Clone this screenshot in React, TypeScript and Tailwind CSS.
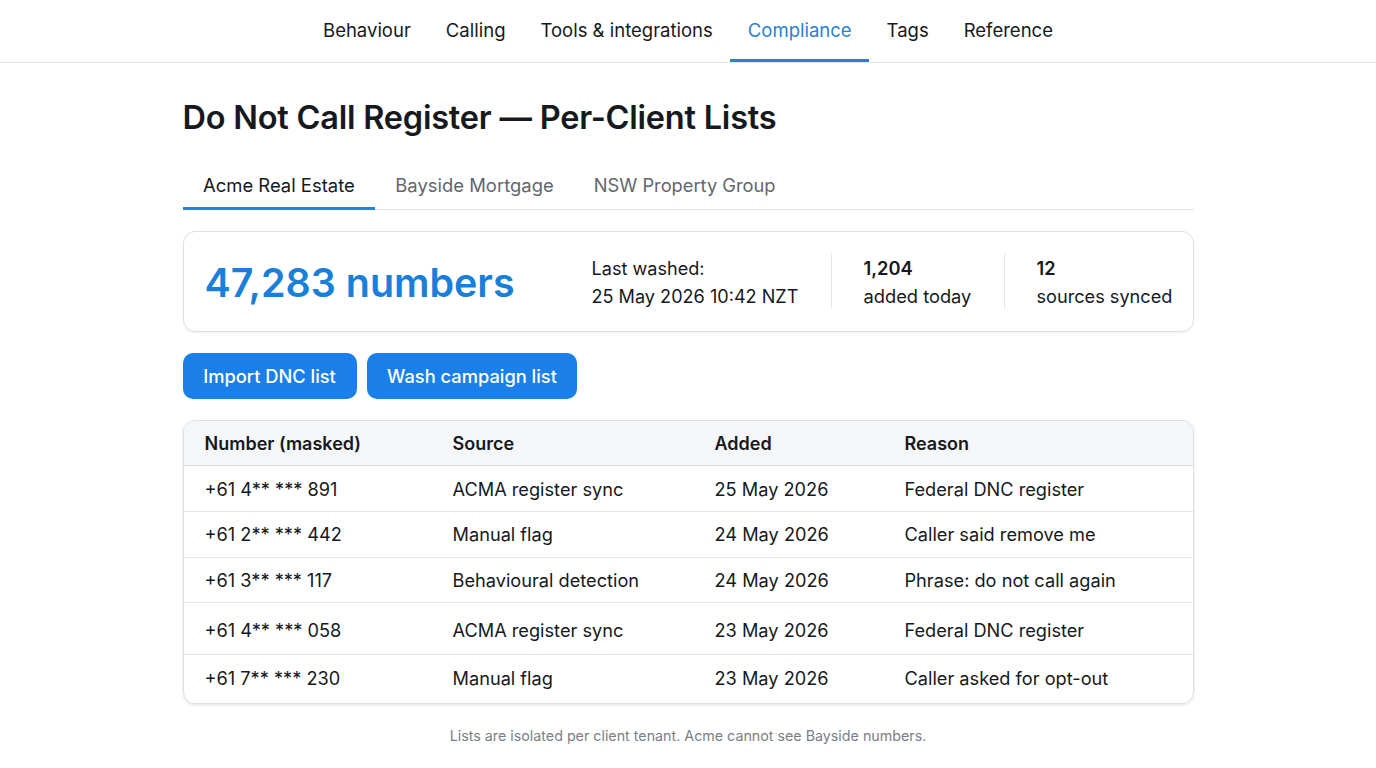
const navItems = ["Behaviour", "Calling", "Tools & integrations", "Compliance", "Tags", "Reference"];

const rows = [
  { num: "+61 4** *** 891", source: "ACMA register sync", added: "25 May 2026", reason: "Federal DNC register", h: "h-[46px] pt-[2px]" },
  { num: "+61 2** *** 442", source: "Manual flag", added: "24 May 2026", reason: "Caller said remove me", h: "h-[46px]" },
  { num: "+61 3** *** 117", source: "Behavioural detection", added: "24 May 2026", reason: "Phrase: do not call again", h: "h-[45px] pt-[2px]" },
  { num: "+61 4** *** 058", source: "ACMA register sync", added: "23 May 2026", reason: "Federal DNC register", h: "h-[52px] pt-[5px]" },
  { num: "+61 7** *** 230", source: "Manual flag", added: "23 May 2026", reason: "Caller asked for opt-out", h: "h-[48px]" },
];

const Row = ({ cells, className }: { cells: string[]; className: string }) => (
  <div className={"grid grid-cols-[248px_262px_190px_1fr] items-center pl-[21px] " + className}>
    {cells.map((c) => (
      <div key={c}>{c}</div>
    ))}
  </div>
);

export default function App() {
  return (
    <div className="h-[768px] bg-white text-[#16191d] font-['Inter',sans-serif] overflow-hidden">
      <div className="flex justify-center h-[63px] border-b border-[#e5e7eb]">
        {navItems.map((item) => (
          <div
            key={item}
            className={
              item === "Compliance"
                ? "flex items-center px-[17.5px] pt-[2px] text-[18.5px] text-[#2a7fd6] border-b-[3px] border-[#2a7fd6] h-[62px]"
                : "flex items-center px-[17.5px] pt-[2px] text-[18.5px] h-[62px] pb-[3px]"
            }
          >
            {item}
          </div>
        ))}
      </div>

      <div className="w-[1011px] ml-[182.5px]">
        <h1 className="text-[32.5px] font-semibold leading-[40px] mt-[35px] tracking-[-0.22px]">
          Do Not Call Register — Per-Client Lists
        </h1>

        <div className="flex mt-[25px] h-[47px] border-b border-[#e1e4e8]">
          <div className="flex items-center px-[20.5px] pt-[1px] text-[18.45px] border-b-[3px] border-[#2a7fd6] h-[47px]">Acme Real Estate</div>
          <div className="flex items-center px-[20px] pt-[2px] pb-[3px] text-[18.45px] text-[#62676d]">Bayside Mortgage</div>
          <div className="flex items-center px-[20px] pt-[2px] pb-[3px] text-[18.3px] text-[#62676d]">NSW Property Group</div>
        </div>

        <div className="flex items-center h-[101px] mt-[21px] border border-[#dcdfe3] rounded-[12px] shadow-[0_1px_2px_rgba(0,0,0,0.06)]">
          <div className="w-[386px] pl-[21px] pt-[4px] text-[39.4px] font-semibold text-[#1a7fd9] leading-none">47,283 numbers</div>
          <div className="w-[261px] pl-[22px] text-[18.1px] leading-[28px]">
            <div>Last washed:</div>
            <div>25 May 2026 10:42 NZT</div>
          </div>
          <div className="w-[173px] h-[56px] mb-[2px] pt-[2px] pl-[32px] border-l border-[#e3e5e8] text-[18.3px] leading-[28px] flex flex-col justify-center">
            <div className="font-semibold">1,204</div>
            <div>added today</div>
          </div>
          <div className="h-[56px] mb-[2px] pt-[2px] pl-[32px] border-l border-[#e3e5e8] text-[18.15px] leading-[28px] flex flex-col justify-center">
            <div className="font-semibold">12</div>
            <div>sources synced</div>
          </div>
        </div>

        <div className="flex gap-[10.5px] mt-[21px]">
          <button className="w-[174px] h-[46px] pt-[1px] rounded-[10px] bg-[#1a7fe8] text-white text-[18.3px] font-medium">Import DNC list</button>
          <button className="w-[210px] h-[46px] pt-[1px] rounded-[10px] bg-[#1a7fe8] text-white text-[18.3px] font-medium">Wash campaign list</button>
        </div>

        <div className="mt-[21px] border border-[#dcdfe3] rounded-[12px] overflow-hidden shadow-[0_1px_3px_rgba(0,0,0,0.12)] text-[18.2px]">
          <Row
            cells={["Number (masked)", "Source", "Added", "Reason"]}
            className="h-[45px] bg-[#f5f6f8] text-[18px] font-semibold border-b border-[#d8dbe0]"
          />
          {rows.map((r, i) => (
            <Row
              key={r.num}
              cells={[r.num, r.source, r.added, r.reason]}
              className={r.h + (i < rows.length - 1 ? " border-b border-[#e1e4e8]" : "")}
            />
          ))}
        </div>

        <div className="text-center text-[14.27px] text-[#7b8085] mt-[21px]">
          Lists are isolated per client tenant. Acme cannot see Bayside numbers.
        </div>
      </div>
    </div>
  );
}
